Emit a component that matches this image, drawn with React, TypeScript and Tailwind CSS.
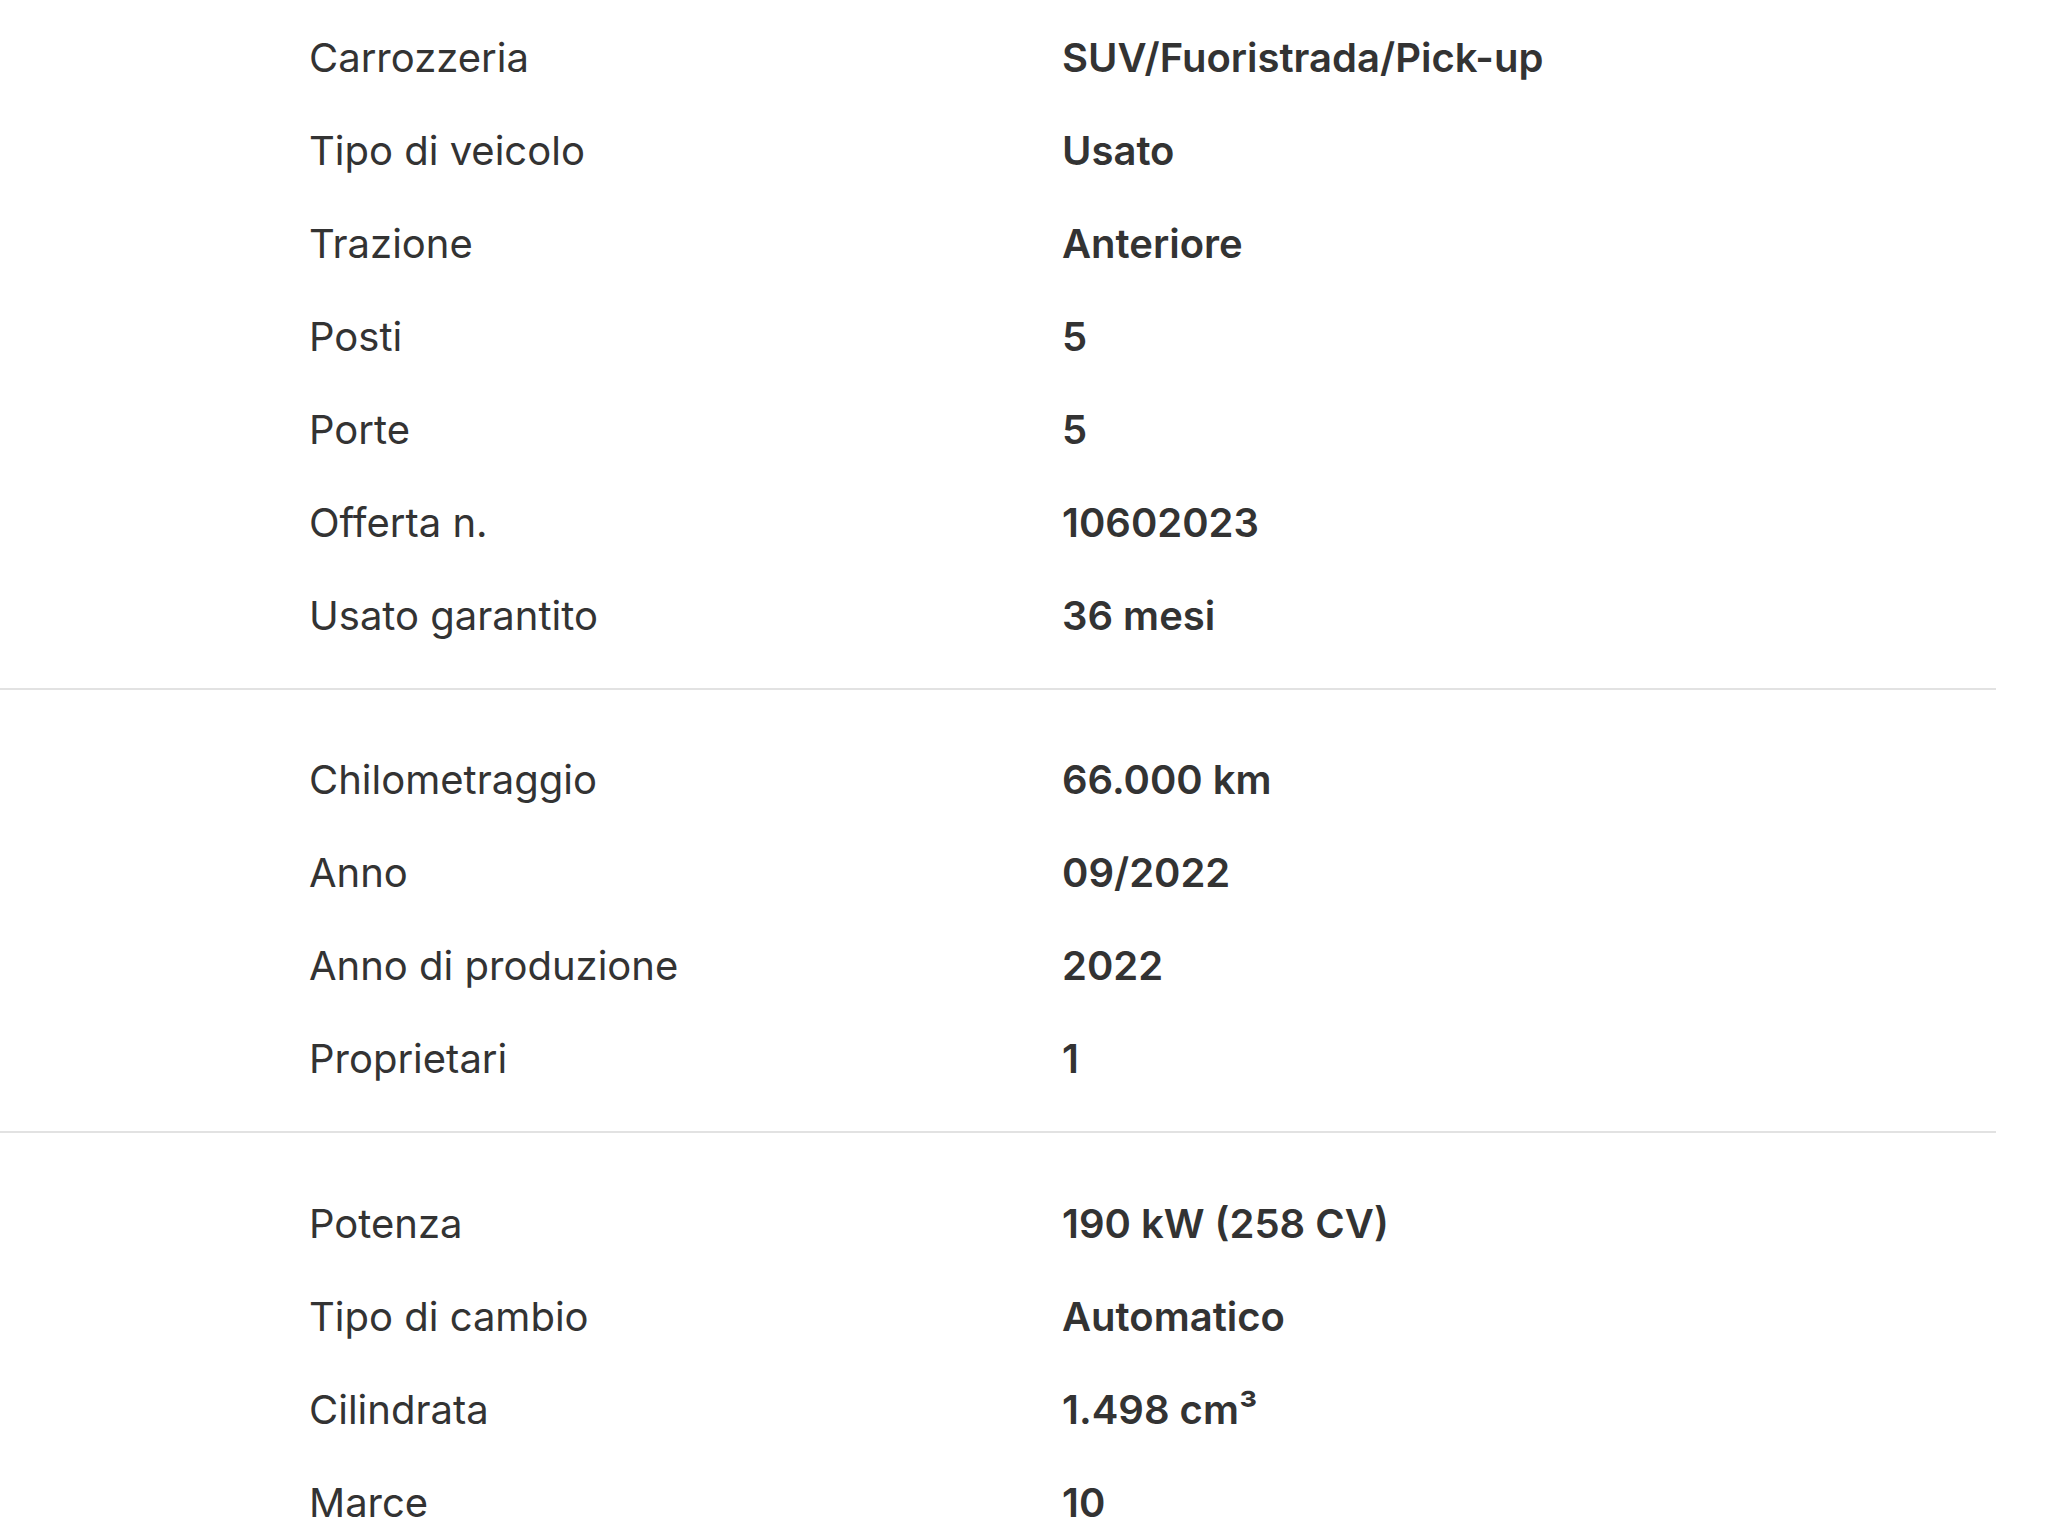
const sections: [string, string][][] = [
  [
    ["Carrozzeria", "SUV/Fuoristrada/Pick-up"],
    ["Tipo di veicolo", "Usato"],
    ["Trazione", "Anteriore"],
    ["Posti", "5"],
    ["Porte", "5"],
    ["Offerta n.", "10602023"],
    ["Usato garantito", "36 mesi"],
  ],
  [
    ["Chilometraggio", "66.000 km"],
    ["Anno", "09/2022"],
    ["Anno di produzione", "2022"],
    ["Proprietari", "1"],
  ],
  [
    ["Potenza", "190 kW (258 CV)"],
    ["Tipo di cambio", "Automatico"],
    ["Cilindrata", "1.498 cm³"],
    ["Marce", "10"],
  ],
];

export default function App() {
  return (
    <div
      className="w-[2048px] h-[1536px] overflow-hidden bg-white text-[#333333]"
      style={{ fontFamily: "Inter, 'Noto Sans', sans-serif" }}
    >
      <div className="w-[1996px]">
        {sections.map((rows, i) => (
          <div
            key={i}
            className={
              i === 0
                ? "pt-[11px] pb-[25px] border-b-2 border-[#e2e2e2]"
                : i === 1
                ? "pt-[44px] pb-[25px] border-b-2 border-[#e2e2e2]"
                : "pt-[44px]"
            }
          >
            {rows.map(([label, value]) => (
              <div key={label} className="flex items-center h-[93.1px] text-[40px] leading-none">
                <div className="w-[1062px] pl-[309px] font-normal">{label}</div>
                <div className="font-semibold">{value}</div>
              </div>
            ))}
          </div>
        ))}
      </div>
    </div>
  );
}
